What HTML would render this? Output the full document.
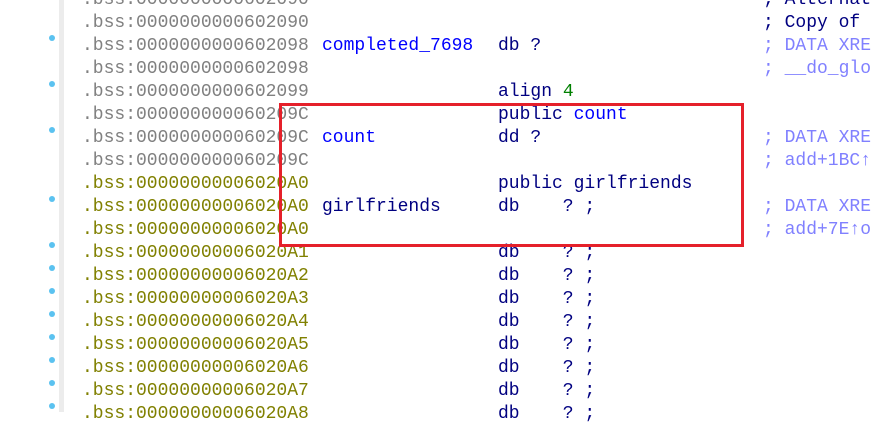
<!DOCTYPE html>
<html><head><style>
body{margin:0;width:872px;height:412px;overflow:hidden;background:#fff;position:relative;font-family:"Liberation Mono",monospace;font-size:18px}
.g{position:absolute;left:59px;top:0;width:5px;height:412px;background:#ececec}
.r{position:absolute;left:0;height:23px;line-height:23px;white-space:pre;width:872px}
.r span{position:absolute;top:0}
.a{left:82px;color:#808080}.o{left:82px;color:#808000}
.n{left:322px;color:#0000ff}.i{left:498px;color:#000080}.c{left:763px;color:#8080ff}.cd{left:763px;color:#000080}
.d{position:absolute;left:49px;width:6px;height:6px;border-radius:50%;background:#5bc2f0}
.box{position:absolute;left:279px;top:103px;width:459px;height:138px;border:3px solid #e5202a}
</style></head><body>
<div class="g"></div>
<div class="r" style="top:-11px"><span class="a">.bss:0000000000602090</span><span class="cd">; Alternat</span></div>
<div class="r" style="top:12px"><span class="a">.bss:0000000000602090</span><span class="cd">; Copy of</span></div>
<div class="r" style="top:35px"><span class="a">.bss:0000000000602098</span><span class="n">completed_7698</span><span class="i">db ?</span><span class="c">; DATA XRE</span></div>
<div class="r" style="top:58px"><span class="a">.bss:0000000000602098</span><span class="c">; __do_glo</span></div>
<div class="r" style="top:81px"><span class="a">.bss:0000000000602099</span><span class="i">align <b style="font-weight:normal;color:#008000">4</b></span></div>
<div class="r" style="top:104px"><span class="a">.bss:000000000060209C</span><span class="i">public <b style="font-weight:normal;color:#0000ff">count</b></span></div>
<div class="r" style="top:127px"><span class="a">.bss:000000000060209C</span><span class="n">count</span><span class="i">dd ?</span><span class="c">; DATA XRE</span></div>
<div class="r" style="top:150px"><span class="a">.bss:000000000060209C</span><span class="c">; add+1BC↑</span></div>
<div class="r" style="top:173px"><span class="o">.bss:00000000006020A0</span><span class="i">public <b style="font-weight:normal;color:#000080">girlfriends</b></span></div>
<div class="r" style="top:196px"><span class="o">.bss:00000000006020A0</span><span class="n" style="color:#000080">girlfriends</span><span class="i">db    ? ;</span><span class="c">; DATA XRE</span></div>
<div class="r" style="top:219px"><span class="o">.bss:00000000006020A0</span><span class="c">; add+7E↑o</span></div>
<div class="r" style="top:242px"><span class="o">.bss:00000000006020A1</span><span class="i">db    ? ;</span></div>
<div class="r" style="top:265px"><span class="o">.bss:00000000006020A2</span><span class="i">db    ? ;</span></div>
<div class="r" style="top:288px"><span class="o">.bss:00000000006020A3</span><span class="i">db    ? ;</span></div>
<div class="r" style="top:311px"><span class="o">.bss:00000000006020A4</span><span class="i">db    ? ;</span></div>
<div class="r" style="top:334px"><span class="o">.bss:00000000006020A5</span><span class="i">db    ? ;</span></div>
<div class="r" style="top:357px"><span class="o">.bss:00000000006020A6</span><span class="i">db    ? ;</span></div>
<div class="r" style="top:380px"><span class="o">.bss:00000000006020A7</span><span class="i">db    ? ;</span></div>
<div class="r" style="top:403px"><span class="o">.bss:00000000006020A8</span><span class="i">db    ? ;</span></div>
<div class="d" style="top:35px"></div><div class="d" style="top:81px"></div><div class="d" style="top:127px"></div>
<div class="d" style="top:196px"></div><div class="d" style="top:242px"></div><div class="d" style="top:265px"></div>
<div class="d" style="top:288px"></div><div class="d" style="top:311px"></div><div class="d" style="top:334px"></div>
<div class="d" style="top:357px"></div><div class="d" style="top:380px"></div><div class="d" style="top:403px"></div>
<div class="box"></div>
</body></html>
